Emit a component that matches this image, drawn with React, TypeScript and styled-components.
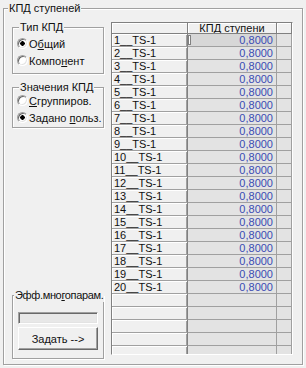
import React from "react";
import styled, { createGlobalStyle, css } from "styled-components";

const GlobalStyle = createGlobalStyle`
  html, body {
    margin: 0;
    padding: 0;
    background: #f0f0f0;
  }
  body {
    font-family: "Liberation Sans", Arial, sans-serif;
    font-size: 11px;
    color: #111;
  }
`;

const Window = styled.div`
  width: 306px;
  height: 368px;
  padding: 8px 0 0 3px;
  box-sizing: border-box;
  background: #f0f0f0;
`;

const etched = css`
  position: relative;
  box-sizing: border-box;
  border: 1px solid #a0a0a0;
  box-shadow: inset 1px 1px 0 #fff, 1px 1px 0 #fff;
`;

const OuterGroup = styled.div`
  ${etched};
  width: 300px;
  height: 357px;
  padding: 13px 0 5px 8px;
  display: flex;
  gap: 7px;
`;

const Caption = styled.span<{ $left?: number; $tight?: boolean }>`
  position: absolute;
  top: -7px;
  left: ${({ $left = 6 }) => $left}px;
  padding: 0 1px;
  line-height: 13px;
  background: #f0f0f0;
  white-space: nowrap;
  letter-spacing: ${({ $tight }) => ($tight ? "-0.35px" : "normal")};
`;

const LeftColumn = styled.div`
  width: 92px;
  padding-top: 5px;
  display: flex;
  flex-direction: column;
`;

const Group = styled.div<{ $h: number; $pt: number; $mt?: number }>`
  ${etched};
  height: ${({ $h }) => $h}px;
  margin-top: ${({ $mt = 0 }) => $mt}px;
  padding: ${({ $pt }) => $pt}px 4px 0 4px;
  display: flex;
  flex-direction: column;
`;

const BottomGroup = styled(Group)`
  margin-top: auto;
  padding-left: 5px;
  padding-right: 5px;
  gap: 3px;
`;

const RadioRow = styled.label`
  height: 17px;
  display: flex;
  align-items: center;
  gap: 1px;
  white-space: nowrap;
`;

const RadioDot = styled.span<{ $on?: boolean }>`
  width: 11px;
  height: 11px;
  box-sizing: border-box;
  border-radius: 50%;
  border: 1px solid;
  border-color: #a0a0a0 #fff #fff #a0a0a0;
  box-shadow: inset 1px 1px 0 #696969, inset -1px -1px 0 #e3e3e3;
  background: ${({ $on }) =>
    $on
      ? "radial-gradient(circle, #000 0 2px, #fff 2.5px)"
      : "#fff"};
  flex: none;
`;

const U = styled.span`
  text-decoration: underline;
  text-underline-offset: 1px;
`;

const Field = styled.div`
  height: 12px;
  box-sizing: border-box;
  border: 1px solid;
  border-color: #a0a0a0 #fff #fff #a0a0a0;
  box-shadow: inset 1px 1px 0 #696969, inset -1px -1px 0 #e3e3e3;
  background: #e8e8e8;
`;

const Button = styled.button`
  height: 23px;
  box-sizing: border-box;
  padding: 0;
  border: 1px solid;
  border-color: #fff #696969 #696969 #fff;
  box-shadow: inset -1px -1px 0 #a0a0a0;
  background: #f0f0f0;
  font: inherit;
  color: #111;
`;

const Grid = styled.div`
  align-self: flex-start;
  height: 333px;
  box-sizing: border-box;
  border: 1px solid;
  border-color: #808080 #fff #fff #808080;
  display: grid;
  grid-template-columns: 76px 89px 15px;
  grid-auto-rows: 13px;
  grid-template-rows: 11px;
  overflow: hidden;
`;

type CellKind = "head" | "fixed" | "data";

const Cell = styled.div<{ $kind: CellKind; $sel?: boolean }>`
  box-sizing: border-box;
  border-right: 1px solid #a0a0a0;
  border-bottom: 1px solid #a0a0a0;
  display: flex;
  align-items: center;
  line-height: 11px;
  white-space: nowrap;
  overflow: hidden;
  ${({ $kind }) =>
    $kind === "head" &&
    css`
      justify-content: center;
      background: #f0f0f0;
      border-color: #808080;
      box-shadow: inset 1px 1px 0 #fff;
    `}
  ${({ $kind }) =>
    $kind === "fixed" &&
    css`
      padding-left: 2px;
      background: #f0f0f0;
      border-right-color: #808080;
      box-shadow: inset 1px 1px 0 #fff, inset -1px 0 0 #a0a0a0;
    `}
  ${({ $kind, $sel }) =>
    $kind === "data" &&
    css`
      justify-content: space-between;
      padding-right: 3px;
      background: ${$sel ? "#d7d7d7" : "#e3e3e3"};
      color: #3a4cb4;
    `}
`;

const Caret = styled.span`
  width: 3px;
  height: 10px;
  box-sizing: border-box;
  border: 1px solid #808080;
  background: #fff;
  flex: none;
`;

const rows = Array.from({ length: 20 }, (_, i) => `${i + 1}__TS-1`);

export default function App(): JSX.Element {
  return (
    <Window>
      <GlobalStyle />
      <OuterGroup>
        <Caption $left={4}>КПД ступеней</Caption>
        <LeftColumn>
          <Group $h={47} $pt={7}>
            <Caption>Тип КПД</Caption>
            <RadioRow>
              <RadioDot $on />
              <span>
                О<U>б</U>щий
              </span>
            </RadioRow>
            <RadioRow>
              <RadioDot />
              <span>
                Компо<U>н</U>ент
              </span>
            </RadioRow>
          </Group>
          <Group $h={41} $pt={4} $mt={13}>
            <Caption>Значения КПД</Caption>
            <RadioRow>
              <RadioDot />
              <span>
                <U>С</U>группиров.
              </span>
            </RadioRow>
            <RadioRow>
              <RadioDot $on />
              <span>
                Задано <U>п</U>ольз.
              </span>
            </RadioRow>
          </Group>
          <BottomGroup $h={64} $pt={16}>
            <Caption $left={1} $tight>
              Эфф.мно<U>г</U>опарам.
            </Caption>
            <Field />
            <Button>
              За<U>д</U>ать --&gt;
            </Button>
          </BottomGroup>
        </LeftColumn>
        <Grid>
          <Cell $kind="head" />
          <Cell $kind="head">КПД ступени</Cell>
          <Cell $kind="head" />
          {rows.map((name, i) => (
            <React.Fragment key={name}>
              <Cell $kind="fixed">{name}</Cell>
              <Cell $kind="data" $sel={i === 0}>
                {i === 0 ? <Caret /> : <span />}
                0,8000
              </Cell>
              <Cell $kind="data" />
            </React.Fragment>
          ))}
          {Array.from({ length: 5 }, (_, i) => (
            <React.Fragment key={`e${i}`}>
              <Cell $kind="fixed" />
              <Cell $kind="data" />
              <Cell $kind="data" />
            </React.Fragment>
          ))}
        </Grid>
      </OuterGroup>
    </Window>
  );
}
